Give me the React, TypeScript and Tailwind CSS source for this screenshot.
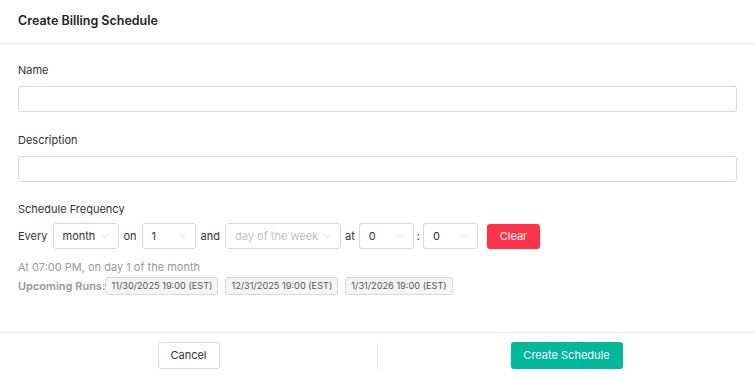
import { ChevronDown } from "lucide-react";

const runs = ["11/30/2025 19:00 (EST)", "12/31/2025 19:00 (EST)", "1/31/2026 19:00 (EST)"];

function Select({ value, width, placeholder }: { value: string; width: string; placeholder?: boolean }) {
  return (
    <div
      className={`flex h-[26px] ${width} items-center justify-between rounded-[3px] border border-[#d9d9d9] bg-white pl-[9px] pr-[7px]`}
    >
      <span className={placeholder ? "text-[#bfbfbf]" : "text-[#333]"}>{value}</span>
      <ChevronDown className="h-[12px] w-[12px] text-[#bfbfbf]" strokeWidth={1.25} />
    </div>
  );
}

export default function App() {
  return (
    <div className="flex h-[378px] w-[755px] flex-col bg-white text-[11px] text-[#333] [font-family:Inter,'Liberation_Sans',sans-serif]">
      {/* Header */}
      <div className="flex h-[44px] items-center border-b border-[#ebebeb] px-[18px]">
        <h1 className="text-[12.5px] font-semibold text-[#222]">Create Billing Schedule</h1>
      </div>

      {/* Body */}
      <div className="flex flex-1 flex-col px-[18px] pt-[18px]">
        <label className="mb-[8px] leading-[16px]">Name</label>
        <input className="h-[26px] rounded-[3px] border border-[#d9d9d9]" />

        <label className="mb-[8px] mt-[20px] leading-[16px]">Description</label>
        <input className="h-[26px] rounded-[3px] border border-[#d9d9d9]" />

        <label className="mb-[6px] mt-[19px] leading-[16px]">Schedule Frequency</label>
        <div className="flex items-center">
          <span className="mr-[5px]">Every</span>
          <Select value="month" width="w-[66px]" />
          <span className="mx-[5px]">on</span>
          <Select value="1" width="w-[54px]" />
          <span className="mx-[5px]">and</span>
          <Select value="day of the week" width="w-[116px]" placeholder />
          <span className="mx-[4px]">at</span>
          <Select value="0" width="w-[55px]" />
          <span className="mx-[3px]">:</span>
          <Select value="0" width="w-[55px]" />
          <button className="ml-[9px] h-[25px] w-[53px] rounded-[3px] bg-[#ff3347] text-white">Clear</button>
        </div>

        <p className="mt-[10px] leading-[16px] text-[#999]">At 07:00 PM, on day 1 of the month</p>
        <div className="mt-[2px] flex items-center">
          <span className="font-semibold text-[#999]">Upcoming Runs:</span>
          <div className="flex gap-[7px]">
            {runs.map((r) => (
              <span
                key={r}
                className="rounded-[3px] border border-[#d9d9d9] bg-[#f5f5f5] px-[5px] py-[1px] text-[9.2px] text-[#555]"
              >
                {r}
              </span>
            ))}
          </div>
        </div>
      </div>

      {/* Footer */}
      <div className="flex h-[46px] border-t border-[#ebebeb] pt-[9px]">
        <div className="flex flex-1 justify-center">
          <button className="h-[27px] w-[62px] rounded-[3px] border border-[#d9d9d9] bg-white text-[#333]">
            Cancel
          </button>
        </div>
        <div className="h-[27px] w-px bg-[#ebebeb]" />
        <div className="flex flex-1 justify-center">
          <button className="h-[27px] w-[112px] rounded-[3px] bg-[#00b89c] text-white">Create Schedule</button>
        </div>
      </div>
    </div>
  );
}
